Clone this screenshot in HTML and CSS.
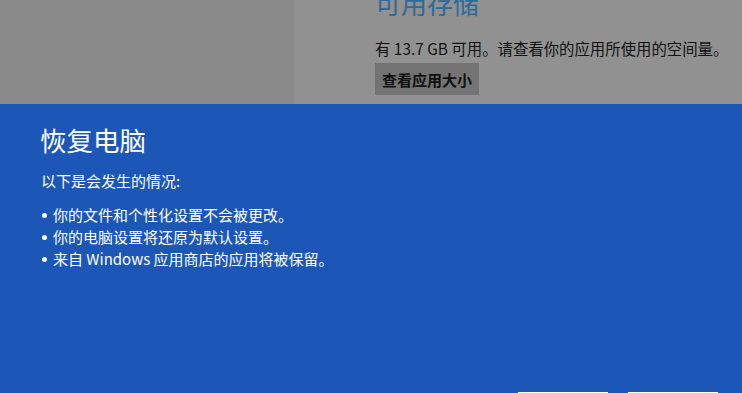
FILE: index.html
```html
<!DOCTYPE html>
<html lang="zh-CN">
  <head>
    <meta charset="UTF-8" />
    <meta name="viewport" content="width=device-width, initial-scale=1.0" />
    <title>恢复电脑</title>
    <link rel="stylesheet" href="styles.css">
  </head>
  <body>
    <div class="settings">
      <div class="side"></div>
      <div class="storage">
        <h2>可用存储</h2>
        <p>有 13.7 GB 可用。请查看你的应用所使用的空间量。</p>
        <button class="sizes">查看应用大小</button>
      </div>
    </div>

    <div class="flyout">
      <h1>恢复电脑</h1>
      <p class="intro">以下是会发生的情况:</p>
      <ul class="changes">
        <li>你的文件和个性化设置不会被更改。</li>
        <li>你的电脑设置将还原为默认设置。</li>
        <li>来自 Windows 应用商店的应用将被保留。</li>
      </ul>
      <div class="actions">
        <button></button>
        <button></button>
      </div>
    </div>
  </body>
</html>
```

FILE: styles.css
```css
* {
  margin: 0;
  padding: 0;
  box-sizing: border-box;
}
body {
  font-family: "Noto Sans CJK SC", "Noto Sans", sans-serif;
  width: 742px;
  height: 393px;
  overflow: hidden;
}

.settings {
  display: flex;
  height: 104px;
  background-color: #919191;
}

.side {
  width: 294px;
  background-color: #898989;
}

.storage {
  padding-left: 81px;
  color: #111;
}

.storage h2 {
  font-size: 26px;
  font-weight: normal;
  line-height: 26px;
  margin-top: -10px;
  color: #2d6a9a;
}

.storage p {
  font-size: 15.4px;
  line-height: 20px;
  margin-top: 22px;
}

.sizes {
  margin-top: 5px;
  width: 104px;
  height: 32px;
  border: none;
  background-color: #737373;
  color: #111;
  font-family: inherit;
  font-size: 15px;
  font-weight: bold;
}

.flyout {
  height: 289px;
  overflow: hidden;
  background-color: #1c57b8;
  color: #fff;
  padding: 19px 24px 0 40px;
}

.flyout h1 {
  font-size: 26.5px;
  font-weight: normal;
  line-height: 34px;
}

.intro {
  font-size: 15px;
  line-height: 22px;
  margin-top: 13px;
  padding-left: 1px;
}

.changes {
  list-style: none;
  margin-top: 12px;
  font-size: 15px;
  line-height: 22px;
}

.changes li::before {
  content: "";
  display: inline-block;
  width: 5px;
  height: 5px;
  border-radius: 50%;
  background-color: #fff;
  margin: 0 6px 0 2px;
  vertical-align: 3px;
}

.actions {
  display: flex;
  justify-content: flex-end;
  gap: 20px;
  margin-top: 122px;
}

.actions button {
  width: 90px;
  height: 32px;
  border: none;
  background-color: #fff;
}
```
